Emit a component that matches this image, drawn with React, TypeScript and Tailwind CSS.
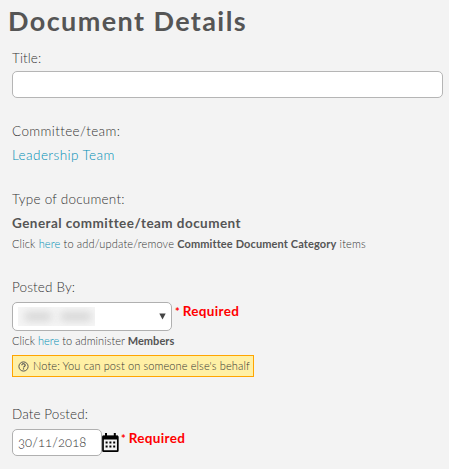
import type { ReactNode } from 'react';

function Label({ children, className }: { children: ReactNode; className: string }) {
  return <div className={`h-6 text-[13.5px] leading-6 whitespace-nowrap ${className}`}>{children}</div>;
}

function Required() {
  return (
    <span className="text-[13.5px] leading-[18px] font-bold whitespace-nowrap text-[#ff0000]">
      <span className="mr-[3px] text-[11px]">*</span>
      <span className="tracking-[0.35px]">Required</span>
    </span>
  );
}

function Calendar() {
  return (
    <svg width="17" height="20" viewBox="0 0 17 20" fill="none" className="shrink-0">
      <rect x="1" y="3.5" width="14.8" height="14.7" rx=".5" stroke="#000" strokeWidth="1.7" />
      <path d="M.6 2.6H16v4H.6zM3 0h2v3H3zM11.8 0h2v3h-2z" fill="#000" />
      <path d="M3.6 8.5h2v2h-2zM7.4 8.5h2v2h-2zM11.2 8.5h2v2h-2zM3.6 12.4h2v2h-2zM7.4 12.4h2v2h-2zM11.2 12.4h2v2h-2z" fill="#000" />
    </svg>
  );
}

export default function App() {
  return (
    <main className="h-[469px] w-[449px] overflow-hidden bg-[#f3f3f3] pl-3 font-['Lato',sans-serif] font-light text-[#333]">
      <h1 className="-ml-1 h-[46px] pt-1 text-[27px] leading-[34px] font-bold tracking-[1.4px] whitespace-nowrap text-[#555]">
        Document Details
      </h1>
      <Label className="tracking-[0.1px]">Title:</Label>
      <input aria-label="Title" className="mt-px block h-[27px] w-[431px] rounded-[5px] border border-[#b5b5b5] bg-white px-1.5 outline-none" />

      <section className="pt-[21px]">
        <Label className="tracking-[0.38px]">Committee/team:</Label>
        <Label className="tracking-[0.43px] text-[#008fb5]">Leadership Team</Label>
      </section>

      <section className="pt-5">
        <Label className="tracking-[0.23px]">Type of document:</Label>
        <Label className="font-bold tracking-[0.45px] text-[#555]">General committee/team document</Label>
        <div className="h-[18px] text-[11px] leading-[18px] tracking-[0.15px] whitespace-nowrap">
          Click <a className="text-[#008fb5]">here</a> to add/update/remove <b className="font-bold tracking-[0.12px] text-[#555]">Committee Document Category</b> items
        </div>
      </section>

      <section className="pt-[22px]">
        <Label className="tracking-[0.15px]">Posted By:</Label>
        <div className="mt-[3px] flex h-[29px] items-start gap-[3px]">
          <div className="flex h-[29px] w-[160px] items-center justify-between rounded-[5px] border border-[#b0b0b0] bg-white pr-[5px] pl-[5px]">
            <div className="flex h-[19px] w-[77px] items-center overflow-hidden bg-[#f6f6f6] pl-1.5">
              <span className="h-[9px] w-7 rounded bg-[#d4d4d4] blur-[4px]" />
              <span className="ml-2 h-[9px] w-8 rounded bg-[#d4d4d4] blur-[4px]" />
            </div>
            <svg width="7" height="7" viewBox="0 0 7 7"><path d="M.3.5h6.4L3.5 6.5z" fill="#444" /></svg>
          </div>
          <Required />
        </div>
        <div className="h-[22px] text-[11px] leading-[20px] tracking-[0.04px] whitespace-nowrap">
          Click <a className="text-[#008fb5]">here</a> to administer <b className="font-bold text-[#555]">Members</b>
        </div>
        <div className="mt-[2px] flex h-[22px] w-[242px] items-center border border-[#ffa500] bg-[#fff0a5] pl-[5px] text-[11px] whitespace-nowrap">
          <svg width="11" height="11" viewBox="0 0 11 11" fill="none" stroke="#555">
            <circle cx="5.5" cy="5.5" r="4.6" />
            <path d="M3.8 4.3c0-2.2 3.4-2 3.4 0 0 1.2-1.7 1-1.7 2.3M5.5 7.3v1.2" strokeWidth="1.2" />
          </svg>
          <span className="ml-[4px] tracking-[0.12px]">Note: You can post on someone else's behalf</span>
        </div>
      </section>

      <section className="pt-[25px]">
        <Label className="tracking-[0.1px]">Date Posted:</Label>
        <div className="mt-[3px] flex h-[27px] items-start">
          <div className="h-[27px] w-[90px] rounded-[5px] border border-[#b0b0b0] bg-white pl-[5px] text-[13px] leading-[25px] tracking-[0.1px] whitespace-nowrap oldstyle-nums">
            30/11/2018
          </div>
          <div className="mr-[2px] pt-[4px]"><Calendar /></div>
          <Required />
        </div>
      </section>
    </main>
  );
}
